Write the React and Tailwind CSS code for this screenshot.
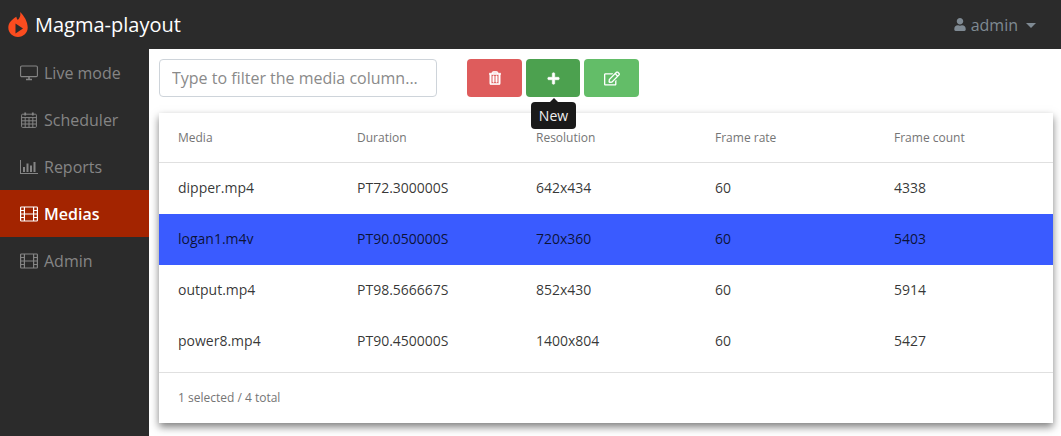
import React from 'react'
import { FaRegTrashAlt, FaPlus, FaUser, FaRegEdit } from 'react-icons/fa'

const Desktop = ({ className }) => (
    <svg viewBox="0 0 18 16" className={className} fill="none" stroke="currentColor" strokeWidth="1.1">
        <rect x="0.6" y="1" width="16.8" height="10.6" rx="1.2" />
        <path d="M6 14.5h6M9 11.6v3" strokeWidth="1.6" />
    </svg>
)

const Calendar = ({ className }) => (
    <svg viewBox="0 0 16 16" className={className} fill="none" stroke="currentColor" strokeWidth="1">
        <rect x="0.6" y="2.2" width="14.8" height="13.2" rx="1" />
        <path d="M0.6 5.6h14.8M0.6 8.8h14.8M0.6 12h14.8M4.2 5.6v9.8M8 5.6v9.8M11.8 5.6v9.8" />
        <path d="M4.2 0.6v3M11.8 0.6v3" strokeWidth="1.8" />
    </svg>
)

const Bars = ({ className }) => (
    <svg viewBox="0 0 18 16" className={className} fill="currentColor">
        <path d="M0 1h1v13h17v1H0z" />
        <rect x="3" y="8" width="2" height="5" />
        <rect x="6.5" y="4.5" width="2" height="8.5" />
        <rect x="10" y="6.5" width="2" height="6.5" />
        <rect x="13.5" y="3" width="2" height="10" />
    </svg>
)

const Film = ({ className }) => (
    <svg viewBox="0 0 18 16" className={className} fill="none" stroke="currentColor" strokeWidth="1.2">
        <rect x="0.6" y="1" width="16.8" height="14" rx="0.8" />
        <path d="M4.4 1v14M13.6 1v14M4.400 8h9.200M0.600 4.500h3.800M0.600 8h3.800M0.600 11.500h3.800M13.600 4.500h3.800M13.600 8h3.800M13.600 11.500h3.800" />
    </svg>
)

const Logo = () => (
    <svg viewBox="0 0 20 25" className="w-[20px] h-[25px]">
        <path fill="#fb4c1f" d="M12 0c1 3.800-.4 6-2.200 8C9 7 8.500 6 8.300 4.800 3.800 7.600 0.300 11 0.300 15.600 0.300 21 4.600 25 10 25s9.700-4 9.700-9.400C19.700 9.800 16.300 4 12 0z" />
        <path fill="#2b2b2b" d="M7.500 11.500l7.500 5-7.500 5z" />
    </svg>
)

const navItems = [
    { label: 'Live mode', Icon: Desktop },
    { label: 'Scheduler', Icon: Calendar },
    { label: 'Reports', Icon: Bars },
    { label: 'Medias', Icon: Film, active: true },
    { label: 'Admin', Icon: Film },
]

const medias = [
    { name: 'dipper.mp4', duration: 'PT72.300000S', resolution: '642x434', rate: '60', count: '4338' },
    { name: 'logan1.m4v', duration: 'PT90.050000S', resolution: '720x360', rate: '60', count: '5403', selected: true },
    { name: 'output.mp4', duration: 'PT98.566667S', resolution: '852x430', rate: '60', count: '5914' },
    { name: 'power8.mp4', duration: 'PT90.450000S', resolution: '1400x804', rate: '60', count: '5427' },
]

const columns = ['Media', 'Duration', 'Resolution', 'Frame rate', 'Frame count']

export default function App() {
    return (
        <div className="w-[1061px] h-[436px] overflow-hidden flex flex-col bg-white font-['Open_Sans',sans-serif]">
            <header className="h-[49px] shrink-0 bg-[#2b2b2b] flex items-center justify-between pl-[8px] pr-[25px]">
                <div className="flex items-center gap-[7px]">
                    <Logo />
                    <span className="text-[20px] text-white">Magma-playout</span>
                </div>
                <div className="flex items-center text-[#7f8a93] text-[16px]">
                    <FaUser className="w-[12px] h-[13px] mr-[5px]" />
                    <span>admin</span>
                    <span className="ml-[8px] mt-[2px] w-0 h-0 border-x-[5px] border-x-transparent border-t-[5px] border-t-[#7f8a93]" />
                </div>
            </header>
            <div className="flex flex-1 min-h-0">
                <nav className="w-[149px] shrink-0 bg-[#2b2b2b]">
                    {navItems.map(({ label, Icon, active }) => (
                        <div
                            key={label}
                            className={`h-[47px] flex items-center pl-[20px] text-[16px] ${active ? 'bg-[#a32400] text-white font-semibold' : 'text-[#858585]'}`}
                        >
                            <Icon className="w-[18px] h-[16px] mr-[6px]" />
                            <span>{label}</span>
                        </div>
                    ))}
                </nav>
                <main className="flex-1 min-w-0 pt-[10px] pl-[10px] pr-[8px]">
                    <div className="flex items-center h-[38px]">
                        <input
                            readOnly
                            placeholder="Type to filter the media column..."
                            className="w-[278px] h-[38px] px-[12px] border border-[#ced4da] rounded-[4px] text-[16px] placeholder:text-[#8a8a8a] outline-none"
                        />
                        <button className="ml-[30px] w-[55px] h-[38px] rounded-[4px] bg-[#de5c5c] text-white flex items-center justify-center">
                            <FaRegTrashAlt className="w-[12px] h-[14px] stroke-[24]" />
                        </button>
                        <div className="relative ml-[4px]">
                            <button className="w-[54px] h-[38px] rounded-[4px] bg-[#4ca14f] text-white flex items-center justify-center">
                                <FaPlus className="w-[13px] h-[13px] stroke-[24]" />
                            </button>
                            <div className="absolute top-[43px] left-[5px] z-10 w-[45px] h-[27px] rounded-[4px] bg-[#1a1a1a] text-[#f0f0f0] text-[14px] flex items-center justify-center">
                                <span className="absolute -top-[4px] left-[19px] w-0 h-0 border-x-[4px] border-x-transparent border-b-[4px] border-b-[#1a1a1a]" />
                                New
                            </div>
                        </div>
                        <button className="ml-[4px] w-[55px] h-[38px] rounded-[4px] bg-[#63bd68] text-white flex items-center justify-center">
                            <FaRegEdit className="w-[16px] h-[15px]" />
                        </button>
                    </div>
                    <div className="mt-[16px] h-[310px] bg-white shadow-[0_4px_8px_rgba(0,0,0,0.5)] flex flex-col">
                        <div className="h-[50px] shrink-0 grid grid-cols-[179px_179px_179px_179px_1fr] items-center pl-[19px] text-[12px] text-[#757575] border-b border-[#e0e0e0]">
                            {columns.map((c) => (
                                <span key={c}>{c}</span>
                            ))}
                        </div>
                        <div className="h-[210px] shrink-0 border-b border-[#e0e0e0]">
                            {medias.map((m) => (
                                <div
                                    key={m.name}
                                    className={`h-[51px] grid grid-cols-[179px_179px_179px_179px_1fr] items-center pl-[19px] pb-[2px] text-[14px] text-black/80 ${m.selected ? 'bg-[#3a5bff]' : ''}`}
                                >
                                    <span>{m.name}</span>
                                    <span>{m.duration}</span>
                                    <span>{m.resolution}</span>
                                    <span>{m.rate}</span>
                                    <span>{m.count}</span>
                                </div>
                            ))}
                        </div>
                        <div className="flex-1 flex items-center pl-[19px] text-[12px] text-[#757575]">
                            1 selected / 4 total
                        </div>
                    </div>
                </main>
            </div>
        </div>
    )
}
